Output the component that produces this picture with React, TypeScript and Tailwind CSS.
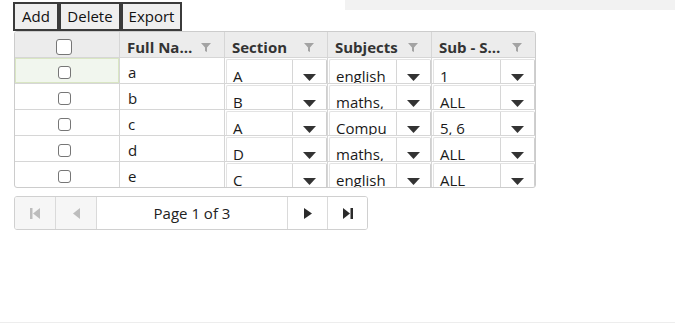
import type { ReactNode } from 'react'

type Row = {
  name: string
  section: string
  subjects: string
  sub: string
}

const rows: Row[] = [
  { name: 'a', section: 'A', subjects: 'english', sub: '1' },
  { name: 'b', section: 'B', subjects: 'maths,', sub: 'ALL' },
  { name: 'c', section: 'A', subjects: 'Compu', sub: '5, 6' },
  { name: 'd', section: 'D', subjects: 'maths,', sub: 'ALL' },
  { name: 'e', section: 'C', subjects: 'english', sub: 'ALL' },
]

const cols = 'grid grid-cols-[104px_105px_103px_104px_104px]'

function FilterIcon() {
  return (
    <svg width="10" height="9" viewBox="0 0 10 9" className="shrink-0">
      <polygon points="0,0 10,0 6,4.5 6,9 4,8 4,4.5" fill="#a3a3a3" />
    </svg>
  )
}

function HeaderCell({ label }: { label: string }) {
  return (
    <div className="flex items-center gap-1 border-l border-[#d6d6d6] pl-[7px] pr-[13px] pt-[4px]">
      <span className="flex-1 truncate font-bold text-[15px] text-[#333]">{label}</span>
      <FilterIcon />
    </div>
  )
}

function SelectCell({ value }: { value: string }) {
  return (
    <div className="h-[25px] overflow-hidden border-l border-[#d6d6d6] pl-[1px] pt-[1px]">
      <div className="flex h-[34px] rounded-[2px] border border-[#cfcfcf] border-l-[#e3e3e3] border-t-[#e3e3e3]">
        <span className="flex-1 overflow-hidden whitespace-nowrap pl-[6px] pt-[6px] text-[15px] leading-[20px] text-[#1a1a1a]">
          {value}
        </span>
        <span className="flex w-[34px] justify-center border-l border-[#d6d6d6] pt-[14px]">
          <svg width="13" height="7" viewBox="0 0 13 7">
            <polygon points="0,0 13,0 6.5,7" fill="#333" />
          </svg>
        </span>
      </div>
    </div>
  )
}

function Checkbox({ big }: { big?: boolean }) {
  return (
    <span
      className={`block rounded-[3px] border border-[#767676] bg-white ${big ? 'h-[16px] w-[16px]' : 'h-[13px] w-[13px]'}`}
    />
  )
}

function PagerBtn({ children, w, disabled }: { children: ReactNode; w: string; disabled?: boolean }) {
  return (
    <div
      className={`flex items-center justify-center border-l border-[#dadada] first:border-l-0 ${w} ${disabled ? 'bg-[#f6f6f6]' : 'bg-white'}`}
    >
      {children}
    </div>
  )
}

export default function App() {
  return (
    <div
      className="flex h-[323px] w-[675px] flex-col border-b border-[#ededed] bg-white text-[14px] text-[#1a1a1a]"
      style={{ fontFamily: '"Open Sans", "Noto Sans", sans-serif' }}
    >
      <div className="flex items-start">
        <div className="ml-[13px] mt-[2px] flex">
          {['Add', 'Delete', 'Export'].map((label, i) => (
            <button
              key={label}
              type="button"
              className={`h-[29px] border-2 border-[#3b3b3b] bg-[#efefef] text-[15px] leading-[25px] text-[#111] ${
                i === 0 ? 'w-[46px]' : i === 1 ? 'w-[62px]' : 'w-[61px]'
              }`}
            >
              {label}
            </button>
          ))}
        </div>
        <div className="ml-auto h-[10px] w-[330px] bg-[#f2f2f2]" />
      </div>

      <div className="ml-[14px] w-[522px] overflow-hidden rounded-[3px] border border-[#cccccc]">
        <div className={`${cols} h-[25px] bg-[#ececec]`}>
          <div className="flex items-center justify-center pr-[6px] pt-[3px]">
            <Checkbox big />
          </div>
          <HeaderCell label="Full Name" />
          <HeaderCell label="Section" />
          <HeaderCell label="Subjects" />
          <HeaderCell label="Sub - Subjects" />
        </div>
        {rows.map((row, idx) => (
          <div key={row.name} className={`${cols} h-[26px] border-t border-[#d6d6d6]`}>
            <div
              className={`flex items-center justify-center pr-[6px] pt-[3px] ${
                idx === 0 ? 'border border-[#d9e6c3] bg-[#f1f6ee]' : ''
              }`}
            >
              <Checkbox />
            </div>
            <div className="border-l border-[#d6d6d6] pl-[8px] pt-[4px] text-[15px] leading-[20px]">
              {row.name}
            </div>
            <SelectCell value={row.section} />
            <SelectCell value={row.subjects} />
            <SelectCell value={row.sub} />
          </div>
        ))}
      </div>

      <div className="ml-[14px] mt-[8px] flex h-[34px] w-[354px] overflow-hidden rounded-[3px] border border-[#d0d0d0]">
        <PagerBtn w="w-[40px]" disabled>
          <svg width="10" height="11" viewBox="0 0 10 11">
            <rect x="0" y="0" width="2.5" height="11" fill="#bdbdbd" />
            <polygon points="10,0 10,11 3,5.5" fill="#bdbdbd" />
          </svg>
        </PagerBtn>
        <PagerBtn w="w-[41px]" disabled>
          <svg width="7" height="11" viewBox="0 0 7 11">
            <polygon points="7,0 7,11 0,5.5" fill="#bdbdbd" />
          </svg>
        </PagerBtn>
        <PagerBtn w="w-[191px]">
          <span className="text-[15px] text-[#222]">Page 1 of 3</span>
        </PagerBtn>
        <PagerBtn w="w-[40px]">
          <svg width="8" height="11" viewBox="0 0 8 11">
            <polygon points="0,0 0,11 8,5.5" fill="#2b2b2b" />
          </svg>
        </PagerBtn>
        <PagerBtn w="flex-1">
          <svg width="10" height="11" viewBox="0 0 10 11">
            <polygon points="0,0 0,11 7,5.5" fill="#2b2b2b" />
            <rect x="7.5" y="0" width="2.5" height="11" fill="#2b2b2b" />
          </svg>
        </PagerBtn>
      </div>
    </div>
  )
}
